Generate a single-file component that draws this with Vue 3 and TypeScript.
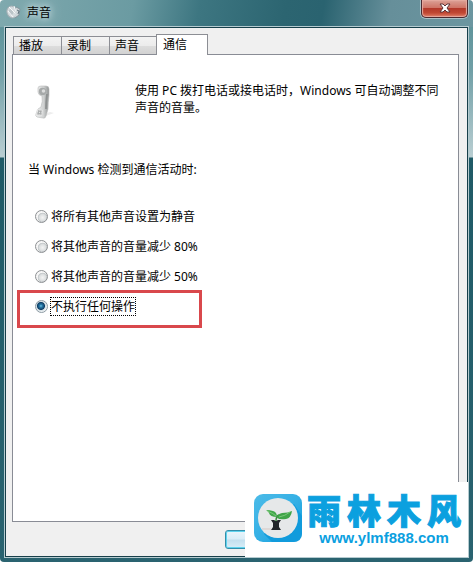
<script setup lang="ts">
import { ref } from 'vue'

const tabs: string[] = ['播放', '录制', '声音', '通信']
const activeTab = ref<string>('通信')

interface Option {
  value: string
  label: string
}

const options: Option[] = [
  { value: 'mute', label: '将所有其他声音设置为静音' },
  { value: 'reduce80', label: '将其他声音的音量减少 80%' },
  { value: 'reduce50', label: '将其他声音的音量减少 50%' },
  { value: 'none', label: '不执行任何操作' },
]
const selected = ref<string>('none')
</script>

<template>
  <main class="window">
    <header class="titlebar">
      <svg class="title-icon" viewBox="0 0 16 16" aria-hidden="true">
        <ellipse cx="6" cy="8" rx="5" ry="6" fill="#d5dbde" stroke="#a3afb4" transform="rotate(-20 6 8)" />
        <ellipse cx="5" cy="8" rx="2" ry="3" fill="#bcc5c9" transform="rotate(-20 5 8)" />
        <path d="M3 3l8 8M2 7l5 6M8 2l2 6" stroke="#f6f8f9" stroke-width="1" />
        <path d="M10 3l4 2-1 6-4 3" fill="#d0d7da" stroke="#81939b" />
        <path d="M11 6l2 1-1 3" fill="none" stroke="#5d717a" />
      </svg>
      <h1 class="title">声音</h1>
      <button class="close" type="button" aria-label="关闭">
        <svg viewBox="0 0 12 10" aria-hidden="true">
          <path d="M1 1h3l2 2 2-2h3L8 5l3 4H8L6 7 4 9H1l3-4z" fill="#fff" stroke="#5b3539" stroke-width="1" />
        </svg>
      </button>
    </header>

    <div class="client">
      <div class="tabs" role="tablist">
        <button
          v-for="tab in tabs"
          :key="tab"
          class="tab"
          :class="{ active: tab === activeTab }"
          type="button"
          role="tab"
          :aria-selected="tab === activeTab"
          @click="activeTab = tab"
        >{{ tab }}</button>
      </div>

      <section class="panel" role="tabpanel">
        <div class="intro">
          <svg class="phone" viewBox="0 0 24 36" aria-hidden="true">
            <defs>
              <linearGradient id="handset" x1="0" x2="1" y1="0" y2="0">
                <stop offset="0" stop-color="#f1f2f2" />
                <stop offset="0.6" stop-color="#cfd1d1" />
                <stop offset="1" stop-color="#8f9292" />
              </linearGradient>
            </defs>
            <path d="M10 32l11-4-4-1-6 2z" fill="#ededed" />
            <path d="M5 3Q5 1 8 1h5q3 0 3 3v6q-1 8-1 14l-2 7q-1 3-3 2l-6-1q-2-1-1-3l2-5 3-2q2-6 1-11-4-1-4-4z" fill="url(#handset)" stroke="#b8baba" stroke-width="0.6" />
            <circle cx="9.5" cy="6.5" r="3.7" fill="#a6a9a9" />
            <circle cx="10.5" cy="6" r="1.8" fill="#dcdddd" />
            <path d="M14 9q-1 8-1 15" fill="none" stroke="#8d9090" stroke-width="1.8" />
            <path d="M4 24l6 1-1 6-6-1z" fill="#e3e4e4" />
            <path d="M5 26l4 1M4 28l5 1M6 25l-1 5M8 25l-1 5" stroke="#a3a6a6" stroke-width="0.8" />
          </svg>
          <p class="description">使用 PC 拨打电话或接电话时，Windows 可自动调整不同声音的音量。</p>
        </div>

        <fieldset class="choices">
          <legend class="question">当 Windows 检测到通信活动时:</legend>
          <label v-for="option in options" :key="option.value" class="choice">
            <input v-model="selected" class="radio" type="radio" name="activity" :value="option.value" />
            <span class="choice-text" :class="{ focused: selected === option.value }">{{ option.label }}</span>
            <span v-if="option.value === 'none'" class="highlight" aria-hidden="true"></span>
          </label>
        </fieldset>
      </section>

      <footer class="actions">
        <button class="ok" type="button" aria-label="确定"></button>
      </footer>
    </div>

    <aside class="brand">
      <svg class="brand-logo" viewBox="0 0 48 48" aria-hidden="true">
        <defs>
          <linearGradient id="tile" x1="0" x2="1" y1="0" y2="1">
            <stop offset="0" stop-color="#4cbbe8" />
            <stop offset="0.5" stop-color="#35b0e5" />
            <stop offset="1" stop-color="#0b9bdc" />
          </linearGradient>
        </defs>
        <rect width="48" height="48" rx="9" fill="url(#tile)" />
        <path d="M10 40L40 10l8 12v17q0 9-9 9H18z" fill="#119bdc" />
        <circle cx="24" cy="24" r="20" fill="#e6e8e9" />
        <path d="M8 35h9" stroke="#d5c9c5" stroke-width="1" />
        <path d="M17 26h3l2 1 2-1h3l-2 3v4l2 3H17l2-3v-4z" fill="#202428" />
        <path d="M22 27Q22 22 25 21" fill="none" stroke="#3d8a40" stroke-width="1.5" />
        <path d="M12 16q4 0 7 1 4 1 4 6-7 0-8-4-1-2-3-3z" fill="#43a84b" />
        <path d="M23 24q0-4 5-5 6 0 10-2-1 7-6 8-6 1-9-1z" fill="#3fa447" />
        <path d="M13 17q6 2 9 5M25 23q6-1 11-5" fill="none" stroke="#8ed58b" stroke-width="0.7" />
      </svg>
      <div class="brand-copy">
        <strong class="brand-name"><span>雨</span><span>林</span><span>木</span><span>风</span></strong>
        <a class="brand-url" href="http://www.ylmf888.com">www.ylmf888.com</a>
      </div>
    </aside>
  </main>
</template>

<style>
body {
  margin: 0;
}
</style>

<style scoped>
.window {
  position: relative;
  box-sizing: border-box;
  display: flex;
  flex-direction: column;
  min-height: 100vh;
  padding: 0 5px 5px;
  border-radius: 4px;
  color: #000;
  font-family: "Noto Sans", "Noto Sans CJK SC", sans-serif;
  font-size: 12px;
  line-height: 17px;
  background:
    linear-gradient(100deg, #7fa9ae 0, #6b9ba2 28%, #3d7681 42%, #2c6571 60%, #2a6370 68%, #668f9a 82%, #6b96a0 100%) top / 100% 27px no-repeat,
    linear-gradient(#5f949b 26px, #709fa6 70px, #b9ced2 157px, #1f5a66 158px, #2a6370 100%);
}

.titlebar {
  display: flex;
  flex: none;
  gap: 5px;
  height: 27px;
  padding-left: 1px;
}

.title-icon {
  width: 16px;
  height: 16px;
  margin-top: 4px;
}

.title {
  margin: 4px 0 0;
  font-size: 12px;
  font-weight: 400;
  line-height: 17px;
  text-shadow: 0 0 6px #d5e4e7, 0 0 10px #c2d8dc, 0 0 14px #c2d8dc;
}

.close {
  display: flex;
  align-items: center;
  justify-content: center;
  width: 47px;
  height: 18px;
  margin: 0 0 0 auto;
  padding: 0 0 2px;
  border: 1px solid #4b2a30;
  border-top: 0;
  border-radius: 0 0 5px 5px;
  background: linear-gradient(#dba196 0, #cf7567 45%, #b3392a 50%, #c04732 75%, #df7b63 100%);
  box-shadow: 0 0 0 1px #a9c1c6, inset 0 0 1px 1px #e5aaa0;
}

.close svg {
  width: 12px;
  height: 10px;
}

.client {
  display: flex;
  flex: 1;
  flex-direction: column;
  padding: 6px 8px 0 6px;
  border: 1px solid #173f4a;
  background: #f0f0f0;
  box-shadow: 0 0 0 1px #b5cbd0;
}

.tabs {
  display: flex;
  align-items: flex-end;
  height: 20px;
  padding-left: 1px;
}

.tab {
  box-sizing: border-box;
  width: 48px;
  height: 18px;
  padding: 0 0 0 5px;
  border: 1px solid #8c8e94;
  border-right-width: 0;
  border-bottom-width: 0;
  background: linear-gradient(#f3f3f3 0, #ececec 50%, #dddddd 52%, #d2d2d2 100%);
  color: #000;
  font: inherit;
  text-align: left;
}

.tab.active {
  z-index: 1;
  width: 52px;
  height: 21px;
  margin: 0 0 -1px -1px;
  padding: 0 0 2px 6px;
  border-right-width: 1px;
  background: #fff;
}

.panel {
  flex: 1;
  padding: 27px 10px 24px 15px;
  border: 1px solid #898c95;
  background: #fff;
}

.intro {
  display: flex;
  gap: 78px;
  align-items: flex-start;
  padding-left: 5px;
}

.phone {
  flex: none;
  width: 24px;
  height: 36px;
  margin-top: 3px;
}

.description {
  flex: 1;
  margin: 0;
}

.choices {
  display: flex;
  flex-direction: column;
  gap: 11px;
  margin: 40px 0 0;
  padding: 0;
  border: 0;
}

.question {
  margin-bottom: 29px;
  padding: 0;
}

.choice {
  position: relative;
  display: flex;
  gap: 2px;
  align-items: center;
  align-self: flex-start;
  padding-left: 7px;
}

.radio {
  box-sizing: border-box;
  width: 13px;
  height: 13px;
  margin: 0;
  border: 1px solid #8c8f92;
  border-radius: 50%;
  appearance: none;
  background: radial-gradient(circle at 60% 60%, #f4f4f4 0, #dcdfe0 35%, #c3c8ca 48%, #f6f6f6 56%);
}

.radio:checked {
  border-color: #8c9aa3;
  background: radial-gradient(circle at 45% 45%, #79c8e8 0, #2a7fae 15%, #103f66 42%, #d5dfe4 52%, #f2f5f6 70%);
}

.choice-text {
  border: 1px dotted transparent;
}

.choice-text.focused {
  border-color: #000;
}

.highlight {
  position: absolute;
  top: -7px;
  left: -11px;
  box-sizing: border-box;
  width: 185px;
  height: 38px;
  border: 3px solid #d9484c;
}

.actions {
  display: flex;
  flex: none;
  align-items: flex-start;
  justify-content: flex-end;
  height: 34px;
  padding: 8px 159px 0 0;
  box-sizing: border-box;
}

.ok {
  width: 75px;
  height: 19px;
  padding: 0;
  border: 1px solid #338eaa;
  border-radius: 3px;
  background: linear-gradient(#eaf5fb 0, #d9edf7 48%, #c3dfee 52%, #d8eef8 100%);
  box-shadow: inset 0 0 0 1px #5fd3ee;
}

.brand {
  position: absolute;
  right: 5px;
  bottom: 5px;
  z-index: 2;
  display: flex;
  gap: 5px;
  align-items: flex-start;
  box-sizing: border-box;
  width: 223px;
  height: 75px;
  padding: 12px 8px 0 9px;
  background: #fff;
}

.brand-logo {
  flex: none;
  width: 48px;
  height: 48px;
}

.brand-copy {
  display: flex;
  flex: 1;
  flex-direction: column;
  align-items: center;
}

.brand-name {
  display: flex;
  gap: 6px;
  color: #0ba0df;
  font-family: "Noto Sans CJK SC", sans-serif;
  font-size: 34px;
  font-weight: 900;
  line-height: 32px;
  -webkit-text-stroke: 1px #0ba0df;
}

.brand-url {
  color: #0ba0df;
  font-family: "Liberation Sans", sans-serif;
  font-size: 15px;
  font-weight: 700;
  line-height: 24px;
  text-decoration: none;
}
</style>
